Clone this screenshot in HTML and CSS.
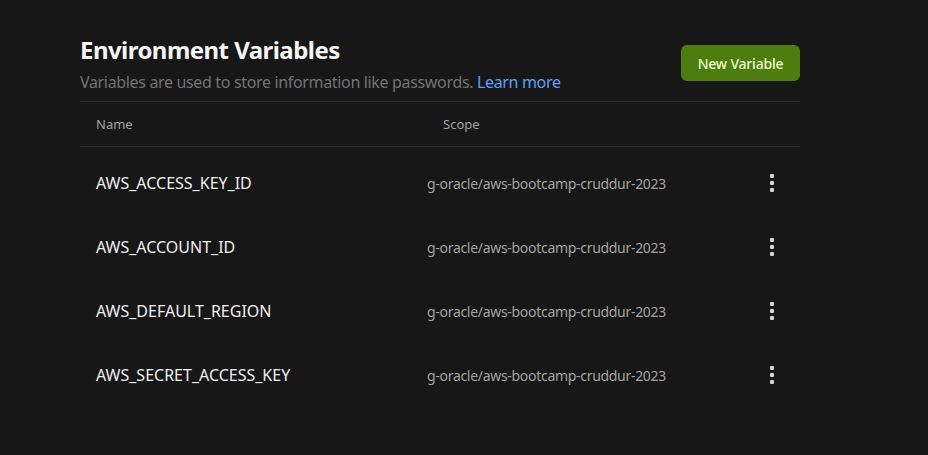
FILE: index.html
```html
<!DOCTYPE html>
<html>
<head>
<meta charset="utf-8">
<link rel="stylesheet" href="styles.css">
</head>
<body>
<main class="page">
  <header class="head">
    <div class="titles">
      <h1 class="title">Environment Variables</h1>
      <p class="subtitle">Variables are used to store information like passwords. <a class="link" href="#">Learn more</a></p>
    </div>
    <button class="btn">New Variable</button>
  </header>
  <div class="table">
    <div class="thead">
      <span class="col-name">Name</span>
      <span class="col-scope">Scope</span>
    </div>
    <div class="tbody">
      <div class="row">
        <span class="col-name name">AWS_ACCESS_KEY_ID</span>
        <span class="col-scope scope">g-oracle/aws-bootcamp-cruddur-2023</span>
        <span class="menu"><i></i><i></i><i></i></span>
      </div>
      <div class="row">
        <span class="col-name name">AWS_ACCOUNT_ID</span>
        <span class="col-scope scope">g-oracle/aws-bootcamp-cruddur-2023</span>
        <span class="menu"><i></i><i></i><i></i></span>
      </div>
      <div class="row">
        <span class="col-name name">AWS_DEFAULT_REGION</span>
        <span class="col-scope scope">g-oracle/aws-bootcamp-cruddur-2023</span>
        <span class="menu"><i></i><i></i><i></i></span>
      </div>
      <div class="row">
        <span class="col-name name">AWS_SECRET_ACCESS_KEY</span>
        <span class="col-scope scope">g-oracle/aws-bootcamp-cruddur-2023</span>
        <span class="menu"><i></i><i></i><i></i></span>
      </div>
    </div>
  </div>
</main>
</body>
</html>
```

FILE: styles.css
```css
html, body {
  margin: 0;
  padding: 0;
  background: #171717;
  height: 100%;
}
body {
  font-family: "Noto Sans", "Open Sans", sans-serif;
  color: #e5e5e5;
}
.page {
  width: 720px;
  padding: 34px 0 0 80px;
}
.head {
  display: flex;
  justify-content: space-between;
  align-items: flex-start;
  padding-bottom: 7px;
  border-bottom: 1px solid #2a2a2a;
}
.title {
  margin: 0;
  font-size: 24px;
  line-height: 32px;
  font-weight: 700;
  color: #f5f5f5;
  letter-spacing: -0.55px;
}
.subtitle {
  margin: 4px 0 0;
  font-size: 16px;
  line-height: 24px;
  color: #737373;
  letter-spacing: -0.34px;
}
.link {
  color: #5ea1f6;
  text-decoration: none;
}
.btn {
  margin-top: 11px;
  width: 119px;
  height: 36px;
  border: none;
  border-radius: 6px;
  background: #4d7c0f;
  color: #ecfccb;
  font-family: inherit;
  font-size: 14px;
  font-weight: 500;
  letter-spacing: -0.2px;
}
.thead {
  display: flex;
  align-items: center;
  height: 44px;
  border-bottom: 1px solid #2a2a2a;
  font-size: 13px;
  color: #a3a3a3;
}
.thead .col-name { width: 347px; padding-left: 16px; }
.tbody { padding-top: 4px; }
.row {
  display: flex;
  align-items: center;
  height: 64px;
}
.row .col-name { width: 331px; padding-left: 16px; }
.name {
  font-size: 16px;
  color: #f0f0f0;
  letter-spacing: 0;
}
.scope {
  flex: 1;
  font-size: 14px;
  color: #a3a3a3;
  letter-spacing: -0.3px;
}
.menu {
  display: flex;
  flex-direction: column;
  gap: 3px;
  margin-right: 26px;
}
.menu i {
  display: block;
  width: 4px;
  height: 4px;
  border-radius: 1px;
  background: #d4d4d4;
}
```
